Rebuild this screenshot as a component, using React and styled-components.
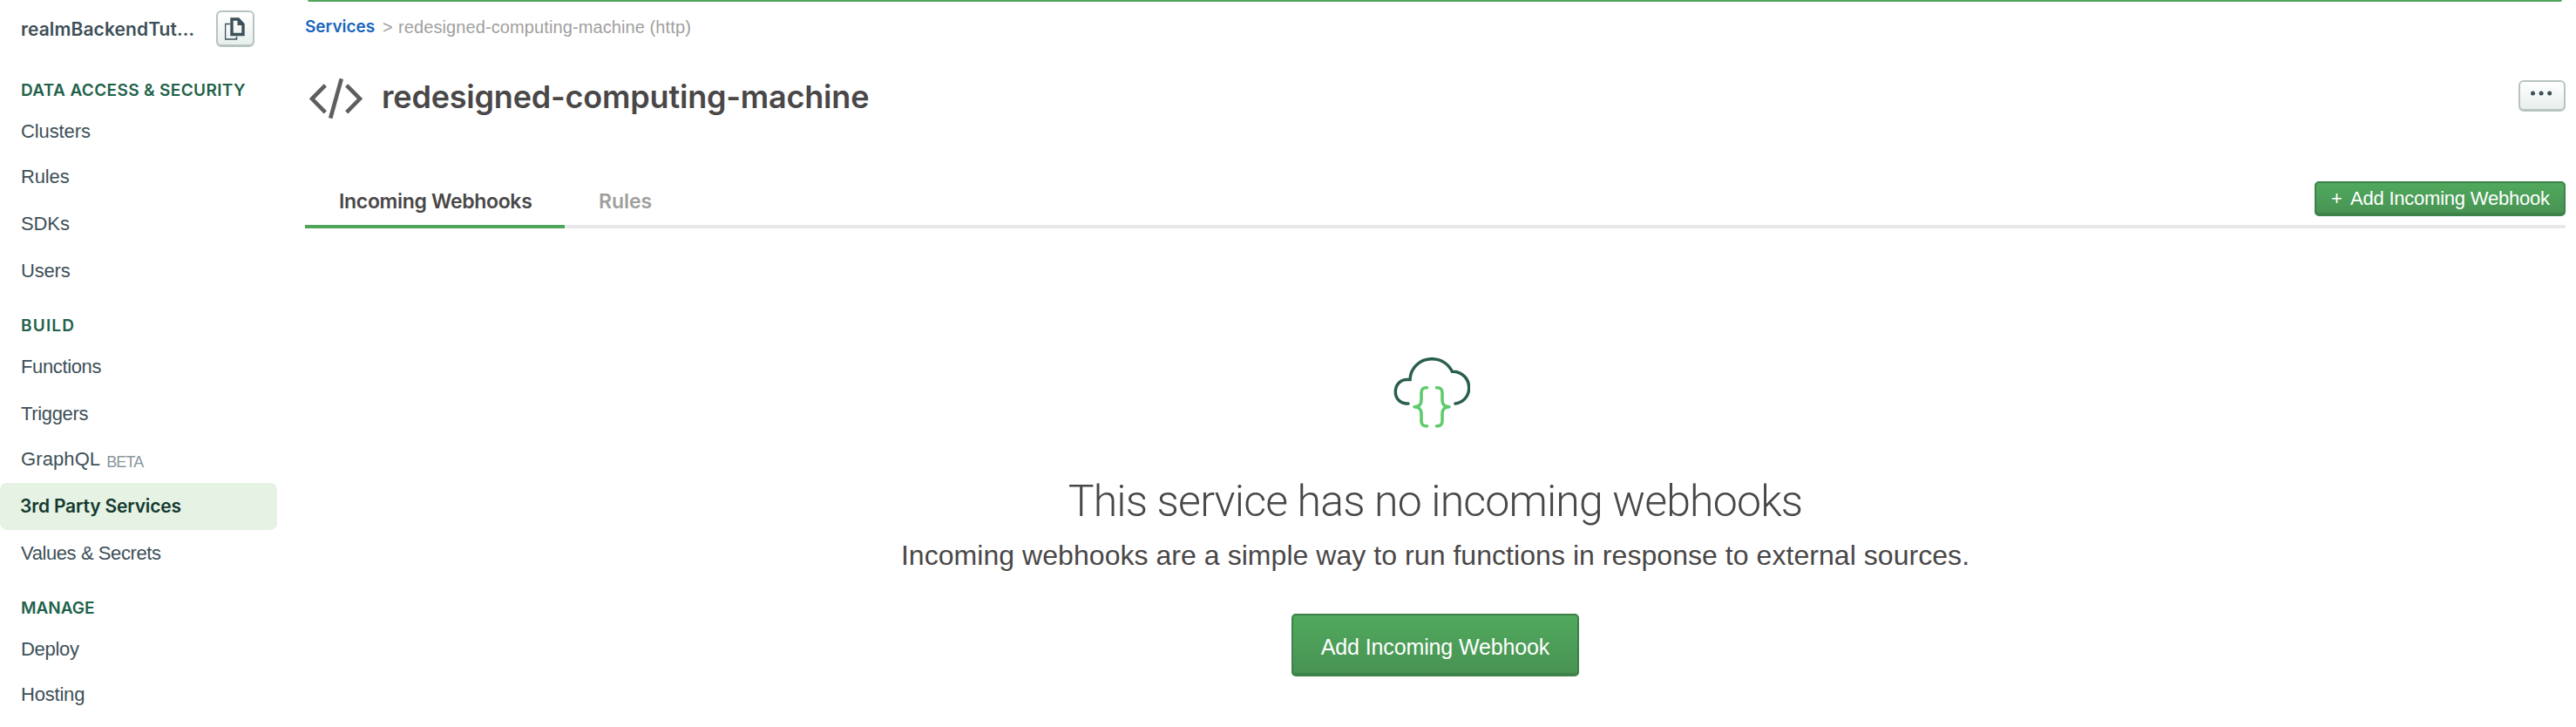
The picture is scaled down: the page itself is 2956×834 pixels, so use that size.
import React from "react";
import styled, { createGlobalStyle } from "styled-components";

const sans = `"Liberation Sans", Arial, sans-serif`;
const medium = `Inter, "Liberation Sans", sans-serif`;
const light = `Roboto, "Liberation Sans", sans-serif`;

const GlobalStyle = createGlobalStyle`
  * { box-sizing: border-box; }
  body {
    margin: 0;
    background: #fff;
    color: #494747;
    font-family: ${sans};
    overflow: hidden;
  }
  button { margin: 0; cursor: pointer; }
`;

const Page = styled.div`
  display: flex;
  height: 834px;
  overflow: hidden;
`;

const Sidebar = styled.nav`
  width: 318px;
  flex: none;
`;

const ProjectBar = styled.div`
  display: flex;
  justify-content: space-between;
  height: 68px;
  padding: 12px 26px 0 24px;
`;

const ProjectName = styled.div`
  font: 600 21px/44px ${medium};
  letter-spacing: 0.1px;
  color: #3d4f58;
  white-space: nowrap;
`;

const LightButton = styled.button`
  display: flex;
  align-items: center;
  justify-content: center;
  width: ${(p) => p.$width}px;
  height: ${(p) => p.$height}px;
  padding: 0 0 2px;
  border: 2px solid #b8c4c2;
  border-radius: 6px;
  background: linear-gradient(#fff, #e7eeec);
  box-shadow: inset 0 -1px 0 #b8c4c2;
`;

const MoreButton = styled(LightButton)`
  margin-top: -2px;
  padding-bottom: 6px;
`;

const SectionTitle = styled.h2`
  margin: 0;
  height: 56px;
  padding-left: 24px;
  font: 600 19px/71px ${medium};
  letter-spacing: ${(p) => p.$spacing}px;
  color: #21614a;
  white-space: nowrap;
`;

const NavItem = styled.a`
  display: flex;
  height: ${(p) => (p.$short ? 52 : 54)}px;
  padding-left: ${(p) => (p.$active ? 23 : 24)}px;
  border-radius: 8px;
  background: ${(p) => (p.$active ? "#e5f2e4" : "transparent")};
  font: ${(p) => (p.$active ? `600 21px/53px ${medium}` : `400 22px/${p.$tagged ? 50 : 53}px ${sans}`)};
  letter-spacing: ${(p) => p.$spacing || 0}px;
  color: ${(p) => (p.$active ? "#13392f" : "#3d4f58")};
  white-space: nowrap;
`;

const Beta = styled.span`
  margin-left: 7px;
  font-size: 18px;
  line-height: 56px;
  letter-spacing: -0.85px;
  color: #89979b;
`;

const Main = styled.main`
  flex: 1;
  display: flex;
  flex-direction: column;
  padding: 0 12px 0 32px;
`;

const Banner = styled.div`
  height: 2px;
  margin: 0 4px 0 3px;
  border-radius: 0 0 3px 3px;
  background: #4fa65a;
`;

const Breadcrumb = styled.div`
  display: flex;
  height: 60px;
  font: 400 20px/58px ${sans};
  letter-spacing: 0.1px;
  color: #9f9f9f;
  white-space: nowrap;
`;

const CrumbLink = styled.a`
  width: 89px;
  font: 600 19px/58px ${medium};
  letter-spacing: 0;
  color: #1a65bd;
`;

const CrumbArrow = styled.span`
  width: 18px;
`;

const TitleRow = styled.header`
  display: flex;
  align-items: center;
  height: 98px;
`;

const CodeMark = styled.svg`
  flex: none;
  margin-top: 4px;
`;

const Title = styled.h1`
  flex: 1;
  margin: 0 0 0 17px;
  font: 600 36px/44px ${medium};
  letter-spacing: -0.2px;
  color: #494747;
`;

const TabBar = styled.div`
  display: flex;
  align-items: flex-end;
  height: 102px;
  border-bottom: 4px solid #e8e8ea;
`;

const Tab = styled.div`
  height: 56px;
  width: ${(p) => p.$width}px;
  margin-bottom: -4px;
  padding-left: 39px;
  border-bottom: 4px solid ${(p) => (p.$active ? "#4fa65a" : "transparent")};
  font: 600 23px/51px ${medium};
  letter-spacing: ${(p) => (p.$active ? -0.32 : -0.05)}px;
  color: ${(p) => (p.$active ? "#494747" : "#9f9f9d")};
  white-space: nowrap;
`;

const GreenButton = styled.button`
  display: flex;
  align-items: center;
  justify-content: ${(p) => (p.$large ? "center" : "flex-start")};
  width: ${(p) => (p.$large ? 330 : 288)}px;
  height: ${(p) => (p.$large ? 72 : 40)}px;
  padding: ${(p) => (p.$large ? "3px 0 0" : "0 0 0 17px")};
  border: 2px solid #3d8249;
  border-radius: 5px;
  background: linear-gradient(#50a95d, #489253);
  box-shadow: inset 0 -2px 0 #3d8249;
  font: 400 ${(p) => (p.$large ? 25 : 22)}px/36px ${sans};
  letter-spacing: ${(p) => (p.$large ? -0.13 : -0.22)}px;
  color: #fff;
  white-space: nowrap;
`;

const TabAction = styled.div`
  margin: 0 0 10px auto;
`;

const Plus = styled.span`
  flex: none;
  width: 22px;
  text-align: left;
`;

const EmptyState = styled.section`
  display: flex;
  flex-direction: column;
  align-items: center;
  padding-top: 148px;
`;

const CloudMark = styled.svg`
  margin-right: 8px;
`;

const EmptyTitle = styled.h2`
  margin: 47px 0 0;
  font: 300 50px/72px ${light};
  letter-spacing: -0.83px;
  color: #494747;
`;

const EmptyText = styled.p`
  margin: 0 0 41px;
  font: 400 32px/52px ${sans};
  letter-spacing: 0.05px;
  color: #494747;
`;

const CopyIcon = () => (
  <svg width="24" height="28" viewBox="1 -2 24 28" fill="none">
    <path d="M7 7.500H1.500V25H14.500V22" stroke="#3d4f58" strokeWidth="1.5" />
    <path d="M9 2H16.500L22 8V19.500H9Z" stroke="#3d4f58" strokeWidth="3.4" />
    <path d="M15.500 1V9H23V7.500L17 1Z" fill="#3d4f58" />
  </svg>
);

const DotsIcon = () => (
  <svg width="26" height="6" viewBox="0 0 26 6" fill="#3d4f58">
    <circle cx="2.5" cy="3" r="2.5" />
    <circle cx="12.1" cy="3" r="2.5" />
    <circle cx="21.7" cy="3" r="2.5" />
  </svg>
);

const CodeIcon = () => (
  <CodeMark width="71" height="48" viewBox="350 89 71 48" fill="none" stroke="#5f5e5e" strokeWidth="4.6">
    <path d="M373.3 97.8L358 113.3L373.3 128.8" />
    <path d="M397.7 97.8L413 113.3L397.7 128.8" />
    <path d="M391.8 90.3L379.2 135.7" />
  </CodeMark>
);

const CloudIcon = () => (
  <CloudMark width="88" height="82" viewBox="1599 410 88 82" fill="none" strokeLinecap="round" strokeLinejoin="miter">
    <g stroke="#2a5f4c" strokeWidth="3.5">
      <path d="M1616 463H1613.5C1606.500 462.500 1601.300 457 1601.300 449.500C1601.300 441.500 1607 435.600 1614 435.600H1618C1618.500 422 1629.500 411.700 1643 411.700C1653.500 411.700 1662 417.500 1666.500 426.300C1677.500 426 1685.700 434.500 1685.700 445C1685.700 454.500 1679 461.800 1670 463" />
    </g>
    <g stroke="#5fcb6d" strokeWidth="3.6" strokeLinejoin="round">
      <path d="M1637.500 444.700H1636.500C1633 444.700 1631 447 1631 450.500V459C1631 463.500 1628.500 466.700 1623 466.700C1628.500 466.700 1631 470 1631 474.500V483C1631 486.500 1633 488.800 1636.500 488.800H1637.500" />
      <path d="M1648.500 444.700H1649.500C1653 444.700 1655 447 1655 450.500V459C1655 463.500 1657.500 466.700 1663 466.700C1657.500 466.700 1655 470 1655 474.500V483C1655 486.500 1653 488.800 1649.500 488.800H1648.500" />
    </g>
  </CloudMark>
);

const sections = [
  {
    title: "DATA ACCESS & SECURITY",
    spacing: 0.36,
    items: [
      { label: "Clusters", short: true, spacing: -0.1 },
      { label: "Rules", spacing: -0.15 },
      { label: "SDKs", spacing: -0.1 },
      { label: "Users", spacing: -0.2 },
    ],
  },
  {
    title: "BUILD",
    spacing: 1.2,
    items: [
      { label: "Functions", spacing: -0.36 },
      { label: "Triggers", spacing: -0.35 },
      { label: "GraphQL", short: true, beta: true, spacing: 0.1 },
      { label: "3rd Party Services", active: true, spacing: -0.18 },
      { label: "Values & Secrets", spacing: -0.41 },
    ],
  },
  {
    title: "MANAGE",
    spacing: 0,
    items: [
      { label: "Deploy", short: true, spacing: -0.3 },
      { label: "Hosting", spacing: -0.2 },
    ],
  },
];

export default function App() {
  return (
    <Page>
      <GlobalStyle />
      <Sidebar>
        <ProjectBar>
          <ProjectName>realmBackendTut…</ProjectName>
          <LightButton $width={44} $height={42} aria-label="Copy">
            <CopyIcon />
          </LightButton>
        </ProjectBar>
        {sections.map((s) => (
          <React.Fragment key={s.title}>
            <SectionTitle $spacing={s.spacing}>{s.title}</SectionTitle>
            {s.items.map((i) => (
              <NavItem key={i.label} $short={i.short} $tagged={i.beta} $active={i.active} $spacing={i.spacing}>
                {i.label}
                {i.beta && <Beta>BETA</Beta>}
              </NavItem>
            ))}
          </React.Fragment>
        ))}
      </Sidebar>
      <Main>
        <Banner />
        <Breadcrumb>
          <CrumbLink>Services</CrumbLink>
          <CrumbArrow>&gt;</CrumbArrow>
          <span>redesigned-computing-machine (http)</span>
        </Breadcrumb>
        <TitleRow>
          <CodeIcon />
          <Title>redesigned-computing-machine</Title>
          <MoreButton $width={54} $height={36} aria-label="More">
            <DotsIcon />
          </MoreButton>
        </TitleRow>
        <TabBar>
          <Tab $active $width={298}>Incoming Webhooks</Tab>
          <Tab $width={140}>Rules</Tab>
          <TabAction>
            <GreenButton>
              <Plus>+</Plus>
              Add Incoming Webhook
            </GreenButton>
          </TabAction>
        </TabBar>
        <EmptyState>
          <CloudIcon />
          <EmptyTitle>This service has no incoming webhooks</EmptyTitle>
          <EmptyText>
            Incoming webhooks are a simple way to run functions in response to external sources.
          </EmptyText>
          <GreenButton $large>Add Incoming Webhook</GreenButton>
        </EmptyState>
      </Main>
    </Page>
  );
}
